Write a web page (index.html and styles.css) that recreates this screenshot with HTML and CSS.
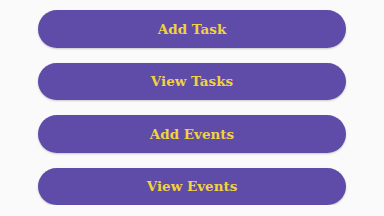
FILE: index.html
```html
<!DOCTYPE html>
<html lang="en">
<head>
    <meta charset="UTF-8">
    <meta name="viewport" content="width=device-width, initial-scale=1.0">
    <title>Menu</title>
    <link rel="stylesheet" href="styles.css">
</head>
<body>
    <div class="menu">
        <button class="menu-btn">Add Task</button>
        <button class="menu-btn">View Tasks</button>
        <button class="menu-btn">Add Events</button>
        <button class="menu-btn">View Events</button>
    </div>
</body>
</html>
```

FILE: styles.css
```css
body {
    margin: 0;
    background-color: #fafafa;
    font-family: "DejaVu Serif", serif;
}

.menu {
    display: flex;
    flex-direction: column;
    gap: 15px;
    padding: 10px 38px 0 38px;
}

.menu-btn {
    height: 37.5px;
    border: none;
    border-radius: 19px;
    background-color: #5f4ba8;
    color: #f0d33f;
    font-family: inherit;
    font-size: 13.5px;
    font-weight: bold;
    box-shadow: 0 1px 2px rgba(0, 0, 0, 0.2);
    cursor: pointer;
}
```
